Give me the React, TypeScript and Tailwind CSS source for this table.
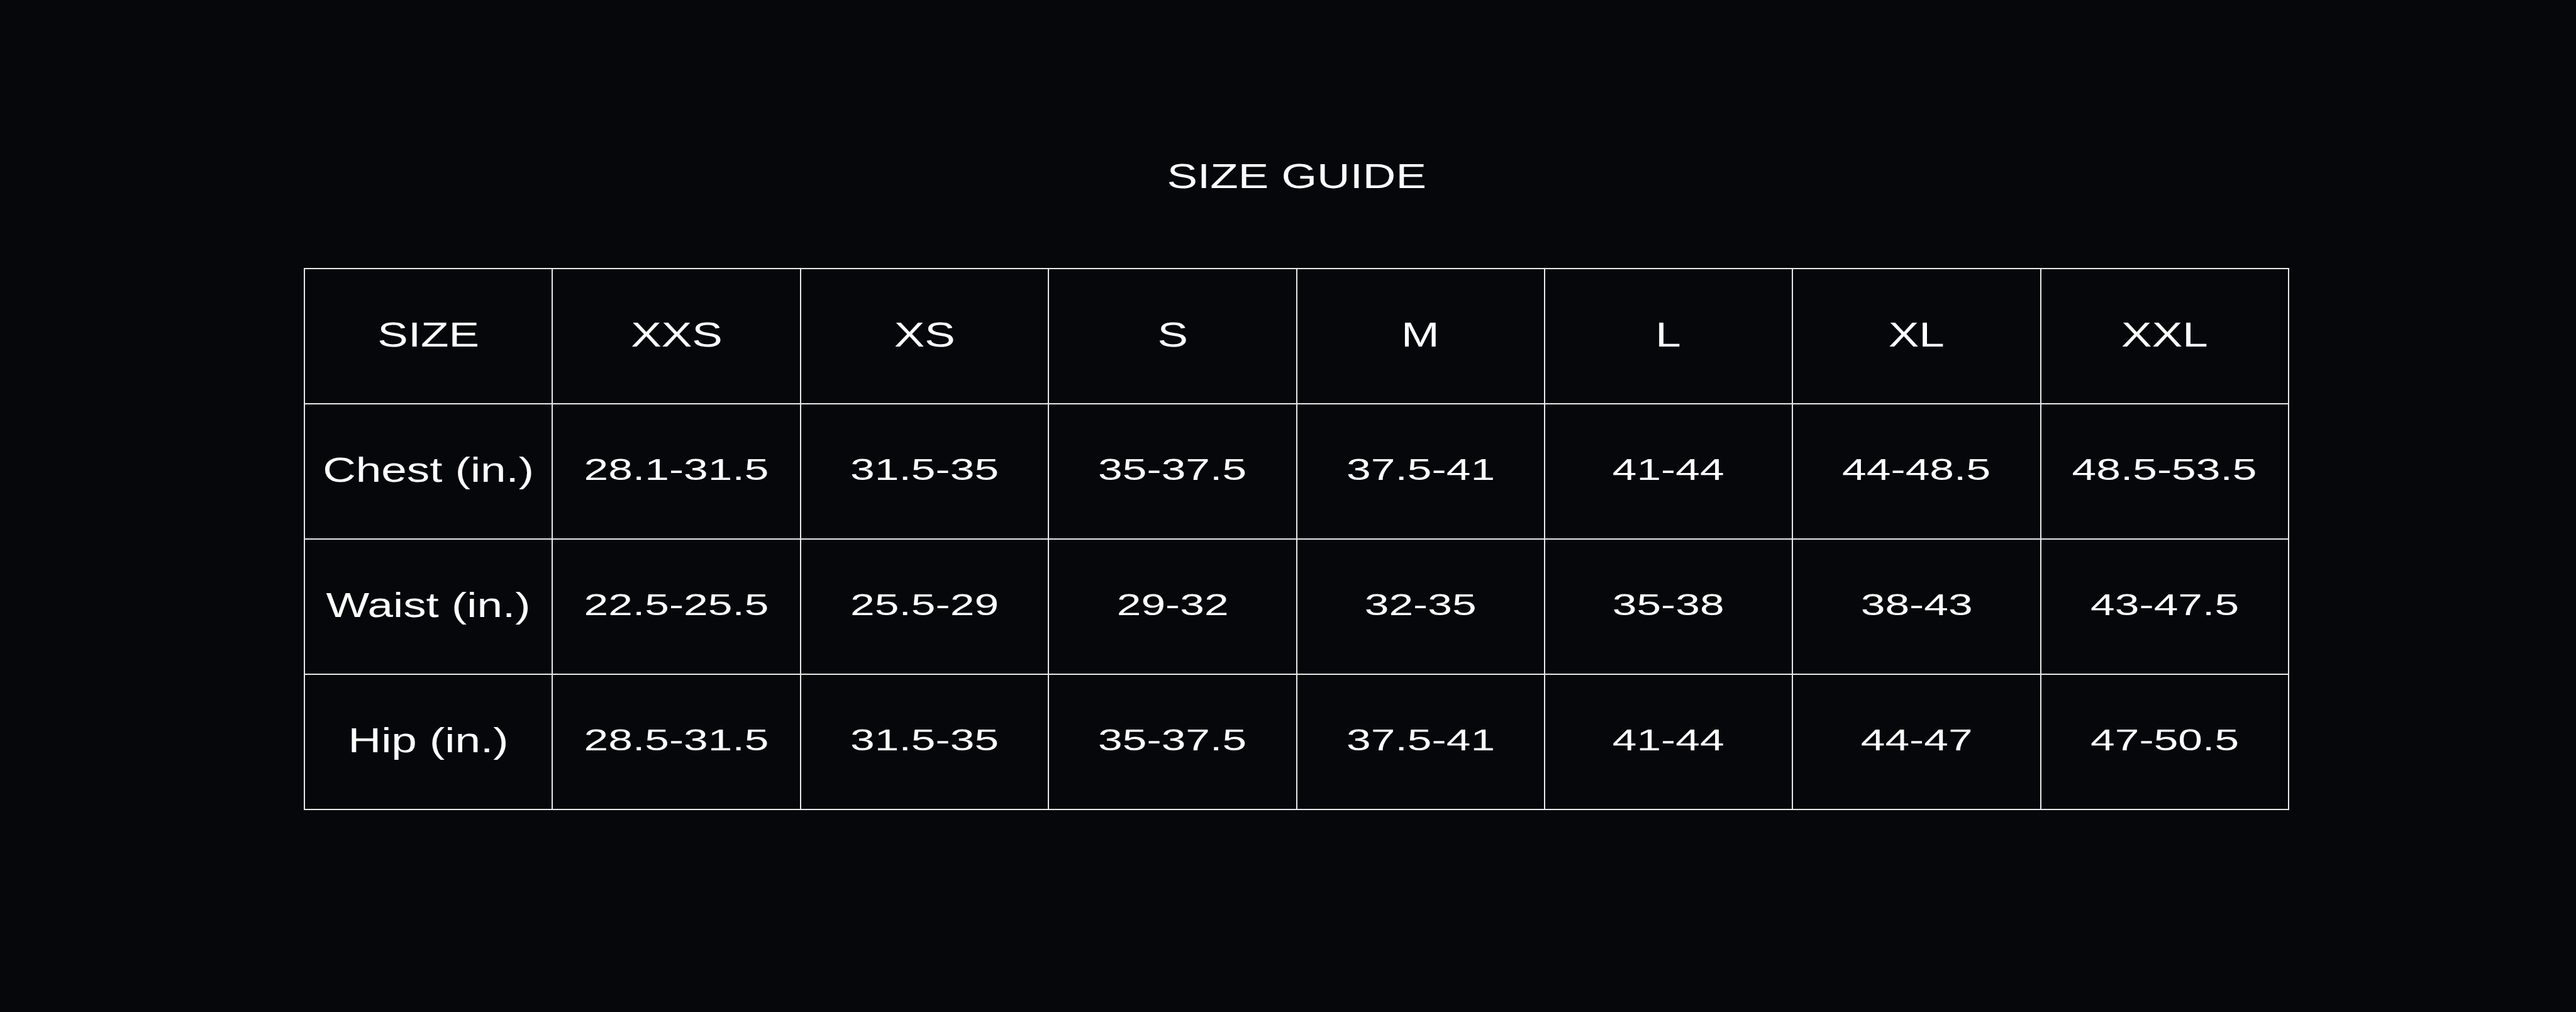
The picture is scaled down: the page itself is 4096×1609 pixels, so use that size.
import { Fragment } from "react";

const HEAD = ["SIZE", "XXS", "XS", "S", "M", "L", "XL", "XXL"];

const ROWS: { label: string; values: string[] }[] = [
  {
    label: "Chest (in.)",
    values: ["28.1-31.5", "31.5-35", "35-37.5", "37.5-41", "41-44", "44-48.5", "48.5-53.5"],
  },
  {
    label: "Waist (in.)",
    values: ["22.5-25.5", "25.5-29", "29-32", "32-35", "35-38", "38-43", "43-47.5"],
  },
  {
    label: "Hip (in.)",
    values: ["28.5-31.5", "31.5-35", "35-37.5", "37.5-41", "41-44", "44-47", "47-50.5"],
  },
];

function Cell({ children, big }: { children: string; big?: boolean }) {
  return (
    <div className="flex h-[215px] items-center justify-center border-r-2 border-b-2 border-[#e8e8e8] pb-[6px]">
      {big ? (
        <span className="inline-block scale-x-[1.3] text-[56px] leading-none">{children}</span>
      ) : (
        <span className="inline-block scale-x-[1.42] text-[49px] leading-none">{children}</span>
      )}
    </div>
  );
}

export default function App() {
  return (
    <main
      className="h-[1609px] w-full bg-[#06070a] pl-[483px] pt-[252px] text-white"
      style={{ fontFamily: '"Liberation Sans", Arial, sans-serif' }}
    >
      <div className="w-[3157px] text-center">
        <h1 className="inline-block scale-x-[1.3] text-[56px] font-normal leading-none">
          SIZE GUIDE
        </h1>
      </div>

      <div className="mt-[118px] grid w-[3157px] grid-cols-8 border-t-2 border-l-2 border-[#e8e8e8]">
        {HEAD.map((h) => (
          <Cell key={h} big>
            {h}
          </Cell>
        ))}
        {ROWS.map((r) => (
          <Fragment key={r.label}>
            <Cell big>{r.label}</Cell>
            {r.values.map((v, i) => (
              <Cell key={i}>{v}</Cell>
            ))}
          </Fragment>
        ))}
      </div>
    </main>
  );
}
